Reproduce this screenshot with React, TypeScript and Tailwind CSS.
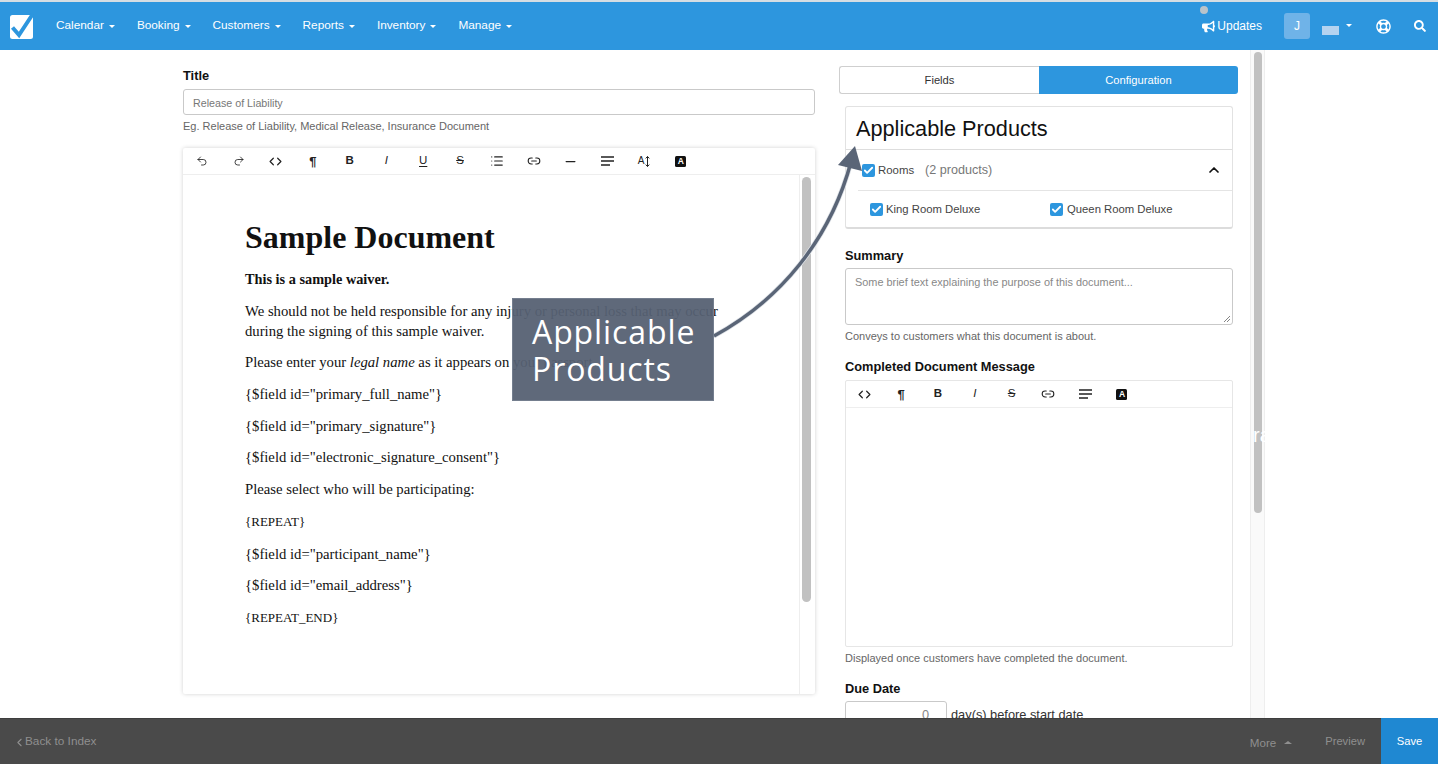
import * as React from "react";
import {
    Check,
    ChevronLeft,
    ChevronUp,
    Code,
    Link2,
    List,
    Minus,
    Redo2,
    Undo2,
} from "lucide-react";
import { FaBullhorn, FaRegLifeRing, FaSearch } from "react-icons/fa";

const NAV = ["Calendar", "Booking", "Customers", "Reports", "Inventory", "Manage"];

const Caret = ({ className = "border-t-white" }: { className?: string }) => (
    <span className={`inline-block w-0 h-0 border-x-[3px] border-x-transparent border-t-[3px] ${className}`} />
);

const InvertedA = () => (
    <span className="flex items-center justify-center size-[11px] rounded-[1.5px] bg-[#111] text-white text-[8.5px] font-bold leading-none">A</span>
);

const TextSize = () => (
    <span className="flex items-center gap-[1px] text-[#222]">
        <span className="text-[10px] leading-none">A</span>
        <svg width="5" height="11" viewBox="0 0 5 11">
            <path d="M2.5 0.5 L2.5 10.5 M0.7 2.4 L2.5 0.5 L4.3 2.4 M0.7 8.6 L2.5 10.5 L4.3 8.6" fill="none" stroke="currentColor" strokeWidth="1" />
        </svg>
    </span>
);

const AlignLines = () => (
    <svg width="13" height="10" viewBox="0 0 13 10">
        <path d="M0 1 H13 M0 5 H13 M0 9 H9" stroke="currentColor" strokeWidth="1.5" />
    </svg>
);

const Glyph = ({ className, children }: { className?: string; children: React.ReactNode }) => (
    <span className={`text-[11.5px] leading-none ${className ?? ""}`}>{children}</span>
);

const ic = { size: 12, strokeWidth: 1.7 };
const UNDO = <Undo2 {...ic} />;
const REDO = <Redo2 {...ic} />;
const CODE = <Code size={13} strokeWidth={2.2} />;
const PILCROW = <Glyph className="font-bold text-[13px]">¶</Glyph>;
const BOLD = <Glyph className="font-bold">B</Glyph>;
const ITALIC = <Glyph className="italic">I</Glyph>;
const UNDERLINE = <Glyph className="underline underline-offset-2">U</Glyph>;
const STRIKE = <Glyph className="line-through">S</Glyph>;
const LINK = <Link2 size={14} strokeWidth={1.8} />;

const FULL_TOOLBAR = [
    UNDO, REDO, CODE, PILCROW, BOLD, ITALIC, UNDERLINE, STRIKE,
    <List size={14} strokeWidth={2} />, LINK, <Minus size={15} strokeWidth={2} />,
    <AlignLines />, <TextSize />, <InvertedA />,
];
const SHORT_TOOLBAR = [CODE, PILCROW, BOLD, ITALIC, STRIKE, LINK, <AlignLines />, <InvertedA />];

function Toolbar({ items, className = "" }: { items: React.ReactNode[]; className?: string }) {
    return (
        <div className={`h-[27px] shrink-0 flex items-center border-b border-[#eeeeee] text-[#222] ${className}`}>
            {items.map((item, i) => (
                <span key={i} className="w-[36.8px] flex items-center justify-center">{item}</span>
            ))}
        </div>
    );
}

function Tick({ className = "" }: { className?: string }) {
    return (
        <span className={`flex items-center justify-center size-[13px] rounded-[2px] bg-[#2d96de] text-white shrink-0 ${className}`}>
            <Check size={11} strokeWidth={4} />
        </span>
    );
}

const PARAGRAPHS: React.ReactNode[] = [
    <strong className="text-[14.3px]">This is a sample waiver.</strong>,
    <>We should not be held responsible for any injury or personal loss that may occur<br />during the signing of this sample waiver.</>,
    <>Please enter your <em>legal name</em> as it appears on your passport</>,
    '{$field id="primary_full_name"}',
    '{$field id="primary_signature"}',
    '{$field id="electronic_signature_consent"}',
    "Please select who will be participating:",
    <span className="text-[13px]">{"{REPEAT}"}</span>,
    '{$field id="participant_name"}',
    '{$field id="email_address"}',
    <span className="text-[13px]">{"{REPEAT_END}"}</span>,
];

const LABEL = "text-[12.8px] font-bold leading-[15px]";
const HELP = "text-[11px] leading-[13px] text-[#666]";

export default function App() {
    return (
        <div className="relative h-[764px] w-[1438px] overflow-hidden bg-white flex flex-col font-['Liberation_Sans',Arial,sans-serif] text-[#111]">
            {/* TOP BAR */}
            <div className="h-[2px] shrink-0 bg-[#d5dde3]" />
            <header className="h-[48px] shrink-0 bg-[#2d96de] flex items-center text-white text-[11.8px]">
                <svg width="26" height="28" viewBox="0 0 26 28" className="ml-[9px] mr-[21px] -mt-[1px]">
                    <rect x="1" y="3" width="23" height="24" rx="2.5" fill="#fff" />
                    <path d="M3.5 15.5 L10 23 L23.5 2.5" fill="none" stroke="#2d96de" strokeWidth="4" />
                </svg>
                <nav className="flex items-center gap-[22px]">
                    {NAV.map((n) => (
                        <span key={n} className="flex items-center gap-[5px]">{n}<Caret /></span>
                    ))}
                </nav>
                <div className="ml-auto flex items-center">
                    <span className="relative flex items-center gap-[2px] text-[12px]">
                        <span className="absolute -left-[2px] -top-[11px] size-[8px] rounded-full bg-[#b9c3ca]" />
                        <FaBullhorn size={13} />Updates
                    </span>
                    <span className="ml-[22px] size-[26px] rounded-[3px] bg-[#6fb3e8] flex items-center justify-center text-[12px]">J</span>
                    <span className="ml-[12px] mt-[9px] w-[17px] h-[9px] bg-[#b4d3f0]" />
                    <span className="ml-[7px] -mt-[1px] flex"><Caret /></span>
                    <FaRegLifeRing size={15} className="ml-[24px]" />
                    <FaSearch size={12} className="ml-[23px] mr-[12px]" />
                </div>
            </header>

            {/* CONTENT */}
            <main className="flex-1 min-h-0 flex overflow-hidden pl-[183px]">
                <section className="w-[632px] shrink-0 flex flex-col pt-[17px]">
                    <label className={`${LABEL} mt-[0.5px]`}>Title</label>
                    <div className="mt-[6.5px] h-[26px] border border-[#c9c9c9] rounded-[3px] flex items-center px-[9px] pt-[2px] text-[10.7px] text-[#777]">Release of Liability</div>
                    <p className={`mt-[5px] ${HELP}`}>Eg. Release of Liability, Medical Release, Insurance Document</p>
                    <div className="mt-[15px] h-[546px] flex flex-col rounded-[2px] shadow-[0_0_4px_rgba(0,0,0,0.18)]">
                        <Toolbar items={FULL_TOOLBAR} className="pl-[1px]" />
                        <div className="flex-1 min-h-0 flex">
                            <div className="flex-1 pl-[62px] pt-[44px] font-['Liberation_Serif',Georgia,serif] text-[#111] text-[14.7px] leading-[20px]">
                                <h1 className="text-[32px] leading-[36px] font-bold mb-[14px]">Sample Document</h1>
                                <div className="flex flex-col gap-[11.7px]">
                                    {PARAGRAPHS.map((p, i) => <p key={i}>{p}</p>)}
                                </div>
                            </div>
                            <div className="w-[16px] shrink-0 border-l border-[#eeeeee] pl-[2px] pt-[2px]">
                                <div className="w-[9px] h-[425px] rounded-full bg-[#c1c1c1]" />
                            </div>
                        </div>
                    </div>
                </section>

                <section className="w-[399px] ml-[24px] shrink-0 flex flex-col pt-[16px]">
                    <div className="h-[28px] shrink-0 flex text-[11.2px]">
                        <span className="w-[200px] flex items-center justify-center border border-[#cfcfcf] border-r-0 rounded-l-[3px] text-[#333]">Fields</span>
                        <span className="flex-1 flex items-center justify-center bg-[#2d96de] rounded-r-[3px] text-white">Configuration</span>
                    </div>
                    <div className="ml-[6px] w-[388px] shrink-0 flex flex-col">
                        <div className="mt-[12px] h-[123px] flex flex-col border border-[#e2e2e2] rounded-[3px] border-b-2 border-b-[#dcdcdc]">
                            <h2 className="h-[43px] shrink-0 flex items-center pl-[10px] pt-[2px] text-[21.7px] border-b border-[#dddddd]">Applicable Products</h2>
                            <div className="h-[41px] shrink-0 flex items-center ml-[12px] pl-[4px] pr-[10px] border-b border-[#e4e4e4] text-[11.4px] text-[#444]">
                                <Tick className="mr-[3px]" />
                                <span className="pt-[1px]">Rooms</span>
                                <span className="ml-[11px] text-[12.6px] text-[#777]">(2 products)</span>
                                <ChevronUp size={16} strokeWidth={2.6} className="ml-auto text-[#111]" />
                            </div>
                            <div className="flex-1 flex items-center pl-[24px] pt-[1px] text-[11.3px] text-[#444]">
                                <span className="w-[180px] flex items-center gap-[3px]"><Tick />King Room Deluxe</span>
                                <span className="flex items-center gap-[4px]"><Tick />Queen Room Deluxe</span>
                            </div>
                        </div>
                        <label className={`mt-[19px] ${LABEL}`}>Summary</label>
                        <div className="relative mt-[5px] h-[57px] border border-[#c9c9c9] rounded-[3px] px-[9px] py-[7px] text-[10.9px] leading-[13px] text-[#888]">
                            Some brief text explaining the purpose of this document...
                            <svg width="8" height="8" viewBox="0 0 8 8" className="absolute right-[1px] bottom-[1px]">
                                <path d="M1 7 L7 1 M4 7 L7 4" stroke="#666" strokeWidth="0.8" />
                            </svg>
                        </div>
                        <p className={`mt-[5px] ${HELP}`}>Conveys to customers what this document is about.</p>
                        <label className={`mt-[16px] ${LABEL}`}>Completed Document Message</label>
                        <div className="mt-[6px] h-[267px] flex flex-col border border-[#e6e6e6] rounded-[2px]">
                            <Toolbar items={SHORT_TOOLBAR} />
                        </div>
                        <p className={`mt-[5px] ${HELP}`}>Displayed once customers have completed the document.</p>
                        <label className={`mt-[16px] ${LABEL}`}>Due Date</label>
                        <div className="mt-[5px] flex items-start gap-[4px] text-[12.8px] text-[#333]">
                            <span className="w-[102px] h-[28px] border border-[#c9c9c9] rounded-[3px] flex items-center justify-end pr-[17px] text-[#888]">0</span>
                            <span className="leading-[28px]">day(s) before start date</span>
                        </div>
                    </div>
                </section>

                <div className="ml-[12px] w-[15px] shrink-0 border-x border-[#eeeeee] bg-[#fafafa] pl-[3px] pt-[2px]">
                    <div className="w-[8px] h-[461px] rounded-full bg-[#c1c1c1]" />
                </div>
            </main>

            {/* BOTTOM BAR */}
            <footer className="h-[46px] shrink-0 relative z-10 bg-[#4a4a4a] border-t border-[#3e3e3e] flex items-center text-[#8f8f8f] text-[11.2px]">
                <span className="ml-[13px] pt-[1px] flex items-center text-[11.8px]"><ChevronLeft size={13} strokeWidth={2} className="-mr-[1px]" />Back to Index</span>
                <span className="ml-auto pt-[2px] flex items-center gap-[8px] text-[11.6px]">More<span className="inline-block w-0 h-0 border-x-[4px] border-x-transparent border-b-[3px] border-b-[#8f8f8f]" /></span>
                <span className="ml-[33px] mr-[16px]">Preview</span>
                <span className="w-[57px] self-stretch -mt-[1px] bg-[#1f88d2] flex items-center justify-center text-white font-medium">Save</span>
            </footer>

            {/* CALLOUT OVERLAY */}
            <svg width="1438" height="764" className="absolute inset-0 pointer-events-none">
                <path d="M714 336 C780 300 830 240 851 162" fill="none" stroke="#dfe3e8" strokeWidth="5" />
                <path d="M714 336 C780 300 830 240 851 162" fill="none" stroke="#5a6577" strokeWidth="3.5" />
                <path d="M855 146 L838 165 L862 171 Z" fill="#5a6577" />
            </svg>
            <div className="absolute left-[512px] top-[298px] w-[202px] h-[103px] bg-[#566173]/95 border border-[#8a93a1]/50 pl-[19px] pt-[14px] text-white text-[32px] tracking-[0.9px] leading-[37px] font-medium font-['Open_Sans','Liberation_Sans',sans-serif]">
                Applicable<br />Products
            </div>
            <span className="absolute left-[1253px] top-[424px] text-white text-[20px] font-medium leading-[22px]">ra</span>
        </div>
    );
}
